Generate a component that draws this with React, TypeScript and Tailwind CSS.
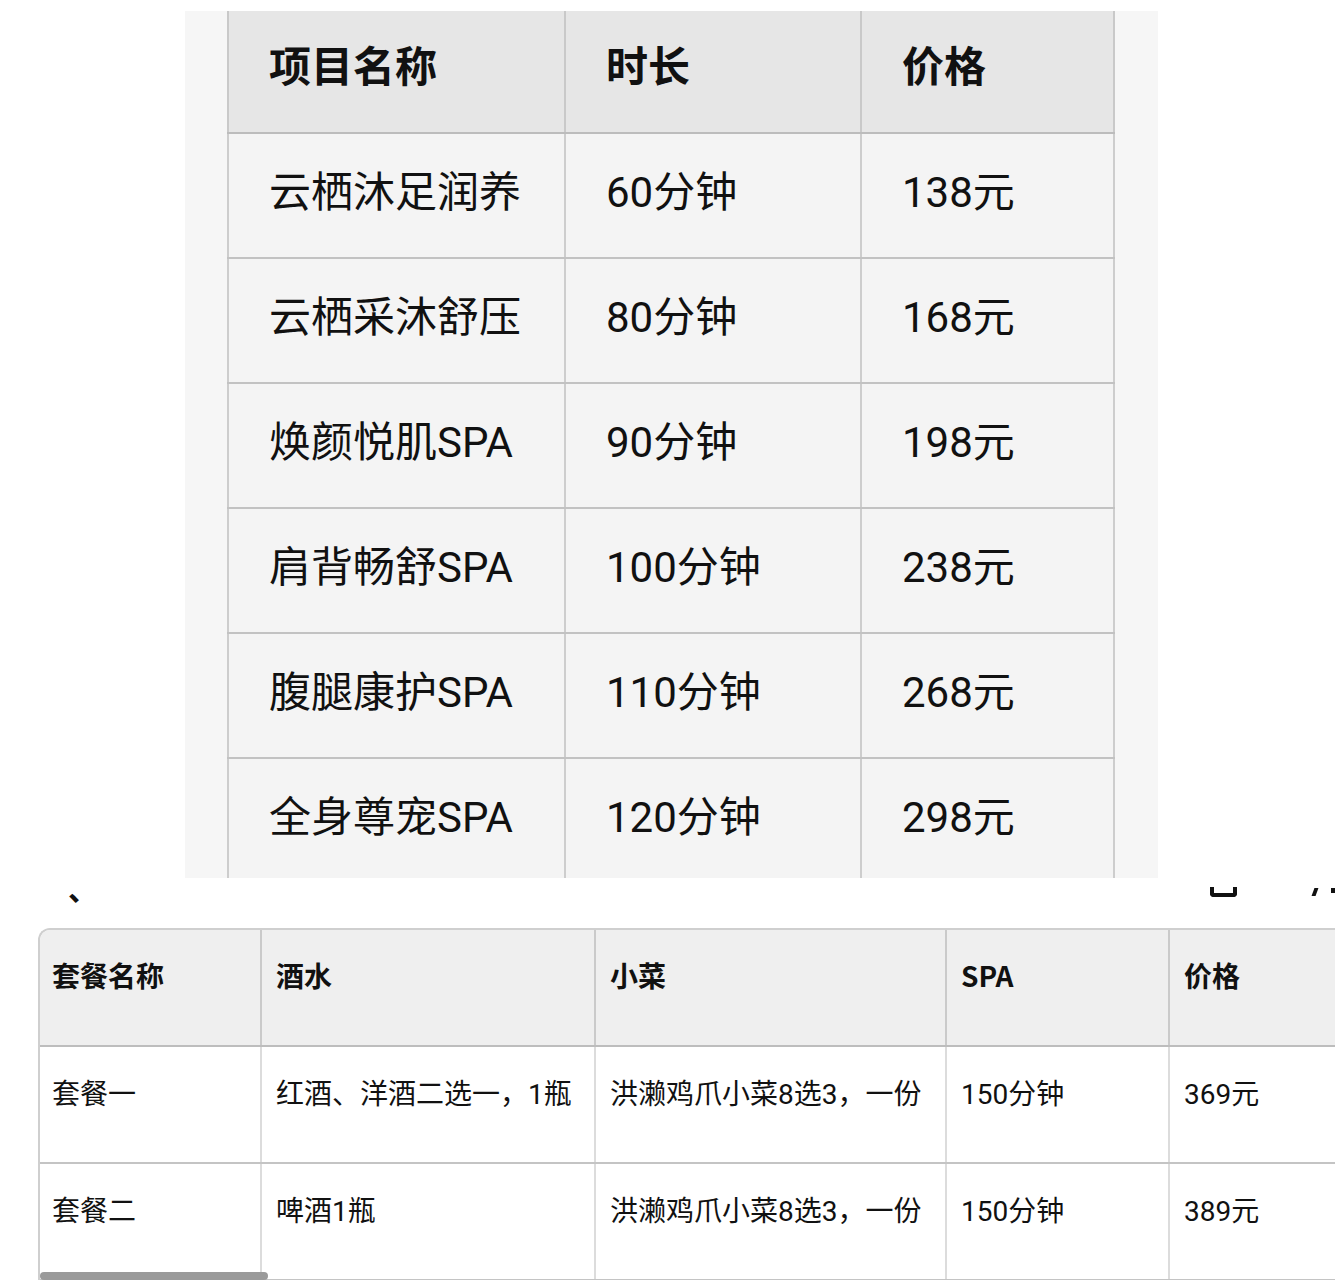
import React from "react";

const topRows = [
  ["云栖沐足润养", "60分钟", "138元"],
  ["云栖采沐舒压", "80分钟", "168元"],
  ["焕颜悦肌SPA", "90分钟", "198元"],
  ["肩背畅舒SPA", "100分钟", "238元"],
  ["腹腿康护SPA", "110分钟", "268元"],
  ["全身尊宠SPA", "120分钟", "298元"],
];

const bottomRows = [
  ["套餐一", "红酒、洋酒二选一，1瓶", "洪濑鸡爪小菜8选3，一份", "150分钟", "369元"],
  ["套餐二", "啤酒1瓶", "洪濑鸡爪小菜8选3，一份", "150分钟", "389元"],
];

const topWidths = ["w-[337px]", "w-[296px]", "w-[255px]"];
const botWidths = ["w-[220px]", "w-[334px]", "w-[351px]", "w-[223px]", "w-[220px]"];

export default function App() {
  return (
    <div
      className="w-[1335px] h-[1280px] bg-white overflow-hidden text-[#111]"
      style={{ fontFamily: 'Roboto, "Noto Sans CJK SC", sans-serif' }}
    >
      {/* top panel */}
      <div className="pt-[11px]">
        <div className="ml-[185px] w-[973px] h-[867px] bg-[#f6f6f6] overflow-hidden pl-[42px]">
          <div className="w-[888px]">
            <div className="flex h-[123px] bg-[#e6e6e6] border-b-2 border-[#bcbcbc]">
              {["项目名称", "时长", "价格"].map((h, i) => (
                <div
                  key={i}
                  className={`${topWidths[i]} border-l-2 border-[#c9c9c9] ${i === 2 ? "border-r-2" : ""} flex items-center pl-[40px] pb-[7px] text-[42px] font-bold leading-none`}
                >
                  {h}
                </div>
              ))}
            </div>
            {topRows.map((r, ri) => (
              <div key={ri} className="flex h-[125px] bg-[#f4f4f4] border-b-2 border-[#c2c2c2]">
                {r.map((c, i) => (
                  <div
                    key={i}
                    className={`${topWidths[i]} border-l-2 border-[#cdcdcd] ${i === 2 ? "border-r-2" : ""} flex items-center pl-[40px] pb-[6px] text-[42px] leading-none`}
                  >
                    {c}
                  </div>
                ))}
              </div>
            ))}
          </div>
        </div>
      </div>

      {/* fragment band: cut-off glyphs from the screenshot seam */}
      <div className="h-[50px] flex items-start pl-[68px]">
        <span className="text-[30px] font-bold leading-none mt-[-3px]">、</span>
        <div className="flex-1" />
        <span className="mt-[9px] w-[27px] h-[10px] border-[4px] border-t-0 border-[#111] rounded-b-[4px]"></span>
        <span className="mt-[10px] ml-[76px] w-[4px] h-[8px] bg-[#111] -skew-x-[20deg]"></span>
        <span className="mt-[10px] ml-[14px] w-[4px] h-[5px] bg-[#111]"></span>
      </div>

      {/* bottom table */}
      <div className="relative ml-[38px] w-[1297px] h-[352px] overflow-hidden">
        <div className="w-[1360px] border-t-2 border-l-2 border-[#cfcfcf] rounded-tl-[12px] overflow-hidden">
          <div className="flex h-[117px] bg-[#efefef] border-b-2 border-[#bdbdbd]">
            {["套餐名称", "酒水", "小菜", "SPA", "价格"].map((h, i) => (
              <div
                key={i}
                className={`${botWidths[i]} ${i > 0 ? "border-l-2 border-[#cacaca]" : ""} ${i === 0 ? "pl-[12px]" : "pl-[14px]"} pt-[28px] text-[28px] font-bold leading-[34px]`}
                style={{ fontFamily: '"Noto Sans CJK SC", sans-serif' }}
              >
                {h}
              </div>
            ))}
          </div>
          {bottomRows.map((r, ri) => (
            <div key={ri} className="flex h-[117px] bg-white border-b-2 border-[#c4c4c4]">
              {r.map((c, i) => (
                <div
                  key={i}
                  className={`${botWidths[i]} ${i > 0 ? "border-l-2 border-[#dcdcdc]" : ""} ${i === 0 ? "pl-[12px]" : "pl-[14px]"} pt-[30px] text-[28px] leading-[36px] whitespace-nowrap`}
                >
                  {c}
                </div>
              ))}
            </div>
          ))}
        </div>
        {/* horizontal scrollbar overlay */}
        <div className="absolute left-[2px] bottom-0 w-[228px] h-[8px] rounded-full bg-[#9a9a9a]"></div>
      </div>
    </div>
  );
}
